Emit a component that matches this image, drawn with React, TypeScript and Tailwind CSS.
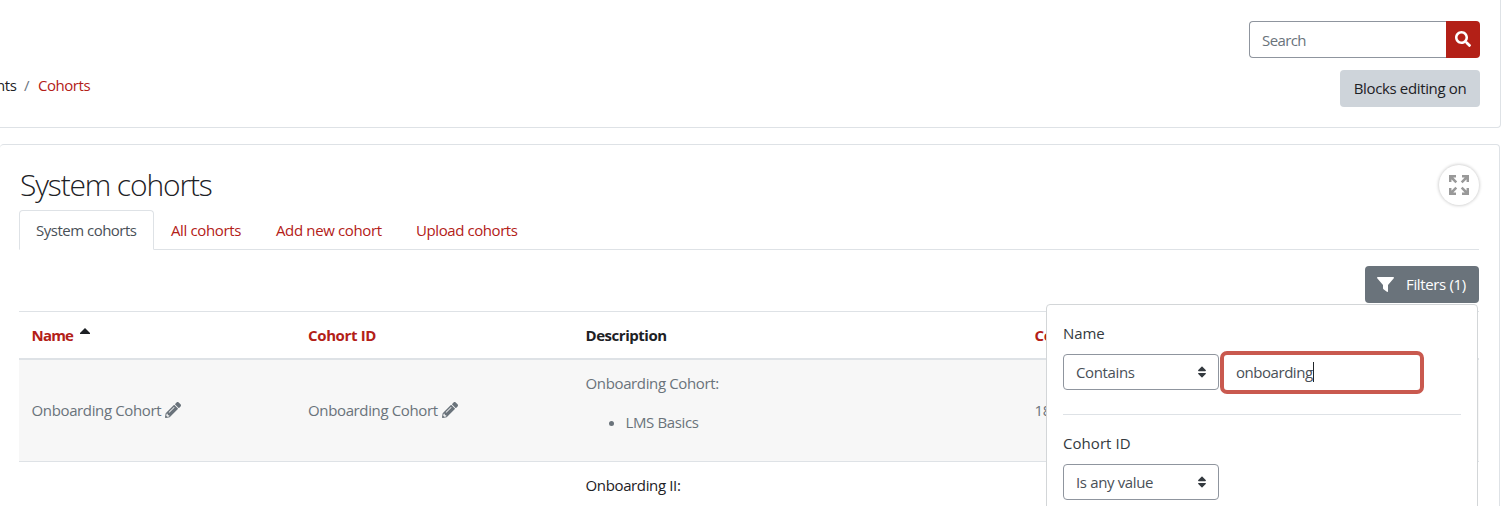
import React from 'react';
import { FaSearch, FaPencilAlt, FaSort } from 'react-icons/fa';

const tabs = [
  { label: 'System cohorts', active: true, width: 'w-[101px] tracking-[-0.5px]' },
  { label: 'All cohorts', active: false, width: 'w-[71px]' },
  { label: 'Add new cohort', active: false, width: 'w-[106px]' },
  { label: 'Upload cohorts', active: false, width: 'w-[102px] tracking-[-0.42px]' },
];

const ExpandIcon = () => (
  <svg viewBox="0 0 20 20" className="h-5 w-5 text-[#999]" fill="none" stroke="currentColor" strokeWidth="2.5">
    <path d="M1.2 7V1.2H7M1.5 1.5L7.3 7.3" />
    <path d="M13 1.2H18.8V7M18.5 1.5L12.7 7.3" />
    <path d="M1.2 13V18.8H7M1.5 18.5L7.3 12.7" />
    <path d="M13 18.8H18.8V13M18.5 18.5L12.7 12.7" />
  </svg>
);

const FilterIcon = () => (
  <svg viewBox="0 0 17 15" className="mr-3 h-[15px] w-[17px]" fill="currentColor">
    <path d="M0.8 0H16.2C16.9 0 17.2 0.8 16.8 1.3L11 8V14.3C11 14.9 10.4 15.2 9.9 14.8L6.5 12.3C6.2 12 6 11.7 6 11.3V8L0.2 1.3C-0.2 0.8 0.1 0 0.8 0Z" />
  </svg>
);

const Editable = ({ text }: { text: string }) => (
  <div className="flex items-center whitespace-nowrap">
    <span className="w-[133.5px]">{text}</span>
    <FaPencilAlt className="mb-px h-4 w-4" />
  </div>
);

const Select = ({ value }: { value: string }) => (
  <div className="flex h-9 w-[156px] items-center justify-between rounded border border-[#8f959e] bg-white pl-3 pr-[9px] text-[#495057]">
    <span>{value}</span>
    <FaSort className="mb-px h-[14px] w-[14px] text-[#343a40]" />
  </div>
);

const FilterMenu = () => (
  <div className="absolute right-[1px] top-[38px] h-[300px] w-[432px] rounded border border-[#d3d6d8] bg-white px-4 pt-[17px] text-[#343a40]">
    <div className="h-[23px] leading-[23px] tracking-[-0.1px]">Name</div>
    <div className="mt-[9px] flex items-center">
      <Select value="Contains" />
      <div className="-my-1 ml-[1px] flex h-[43px] w-[204px] items-center rounded-[7px] border-4 border-[#c9594f] bg-white pl-3 text-[#495057]">
        <span className="tracking-[-0.46px]">onboarding</span>
        <span className="h-5 w-px bg-[#212529]"></span>
      </div>
    </div>
    <hr className="mb-4 mt-6 border-[#dee2e6]" />
    <div className="mt-[17px] h-[23px] leading-[23px] tracking-[0.05px]">Cohort ID</div>
    <div className="mt-[9px]">
      <Select value="Is any value" />
    </div>
  </div>
);

const App = () => {
  return (
    <div className="h-[506px] w-[1502px] overflow-hidden bg-white font-['Open_Sans','Noto_Sans',sans-serif] text-[15px] leading-[22.5px] tracking-[-0.36px] text-[#1d2125]">
      {/* Page header */}
      <header className="flex h-32 w-[1501px] justify-between rounded-br border-b border-r border-[#dee2e6] pr-5">
        <nav className="flex pt-[74px]">
          <span className="-ml-1 w-[28px]">nts</span>
          <span className="w-[14px] text-[#6c757d]">/</span>
          <a className="tracking-[-0.46px] text-[#b32017]">Cohorts</a>
        </nav>
        <div className="flex flex-col items-end pt-[21px]">
          <div className="flex h-[37px] w-[231px]">
            <div className="flex flex-1 items-center rounded-l border border-r-0 border-[#8f959e] pl-3 pt-px tracking-[-0.6px] text-[#6a737b]">Search</div>
            <button className="flex w-[34px] items-center justify-center rounded-r bg-[#b32017] text-white">
              <FaSearch className="mb-px h-4 w-4" />
            </button>
          </div>
          <button className="mt-3 h-[37px] w-[140px] rounded bg-[#ced4da]">Blocks editing on</button>
        </div>
      </header>

      {/* Main region */}
      <main className="mt-4 h-[400px] w-[1500px] rounded border-r border-t border-[#dee2e6] pl-[19px] pr-5">
        <div className="flex h-[65px] justify-between">
          <h2 className="pl-px pt-5 text-[30px] font-light leading-[40px] tracking-[-1.15px]">System cohorts</h2>
          <button className="mt-5 flex h-10 w-10 items-center justify-center rounded-full bg-white shadow-[0_0_3px_1px_rgba(0,0,0,0.17)]">
            <ExpandIcon />
          </button>
        </div>

        <div className="flex h-10 border-b border-[#dee2e6]">
          {tabs.map((tab) => (
            <div
              key={tab.label}
              className={`h-10 whitespace-nowrap rounded-t border px-4 pt-2 ${
                tab.active ? 'border-[#dee2e6] border-b-white bg-white text-[#495057]' : 'border-transparent text-[#b32017]'
              }`}
            >
              <div className={tab.width}>{tab.label}</div>
            </div>
          ))}
        </div>

        <div className="relative mt-4 flex justify-end">
          <button className="flex h-[37px] w-[114px] items-center rounded bg-[#6a737b] pl-3 text-white">
            <FilterIcon />
            <span>Filters (1)</span>
          </button>
          <FilterMenu />
        </div>

        <table className="mt-2 w-full table-fixed border-collapse text-left">
          <colgroup>
            <col className="w-[277px]" />
            <col className="w-[277px]" />
            <col className="w-[449px]" />
            <col />
          </colgroup>
          <thead>
            <tr className="h-[47px] border-b-2 border-t border-[#dee2e6]">
              <th className="pl-[12.5px] pr-3 font-bold text-[#b32017]">
                <div className="flex items-center">
                  <span className="mr-[7px] tracking-[-0.8px]">Name</span>
                  <svg viewBox="0 0 10 6" className="mb-2 h-[6px] w-[10px]" fill="#1d2125">
                    <path d="M5 0L10 5V6H0V5Z" />
                  </svg>
                </div>
              </th>
              <th className="px-3 font-bold text-[#b32017]">Cohort ID</th>
              <th className="pl-[12.5px] pr-3 font-bold tracking-[-0.46px]">Description</th>
              <th className="pl-[12.5px] pr-3 font-bold text-[#b32017]">Co</th>
            </tr>
          </thead>
          <tbody>
            <tr className="border-b border-[#dee2e6] bg-[#f7f7f7] text-[#6a737b]">
              <td className="pl-[12.5px] pr-3"><Editable text="Onboarding Cohort" /></td>
              <td className="px-3"><Editable text="Onboarding Cohort" /></td>
              <td className="py-3 pl-[12.5px] pr-3">
                <p className="mb-[17px]">Onboarding Cohort:</p>
                <ul className="mb-[15px] list-disc pl-10">
                  <li>LMS Basics</li>
                </ul>
              </td>
              <td className="pl-[12.5px] pr-3">18</td>
            </tr>
            <tr>
              <td></td>
              <td></td>
              <td className="py-3 pl-[12.5px] pr-3">Onboarding II:</td>
              <td></td>
            </tr>
          </tbody>
        </table>
      </main>
    </div>
  );
};

export default App;
